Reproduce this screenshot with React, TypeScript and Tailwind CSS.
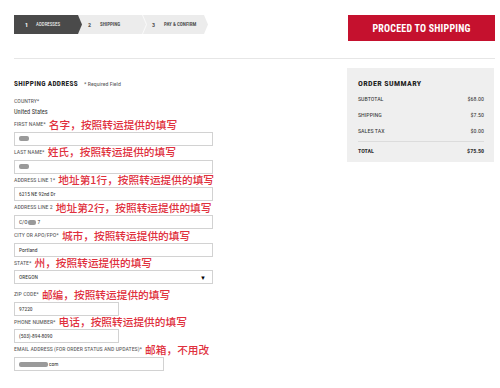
import React from "react";

const narrow = "font-['Roboto_Condensed','Liberation_Sans',sans-serif]";
const cjk = "font-['Noto_Sans_CJK_SC','Noto_Sans',sans-serif]";

function Blob({ w }: { w: number }) {
  return <span className="inline-block h-[5px] rounded-[2px] bg-[#9a9a9a] blur-[0.6px]" style={{ width: w }} />;
}

function Field({
  label,
  note,
  width,
  children,
}: {
  label: string;
  note?: string;
  width: string;
  children?: React.ReactNode;
}) {
  return (
    <div>
      <div className="h-[13.7px] flex items-center gap-[3px] whitespace-nowrap">
        <span className="text-[5.9px] text-[#555] uppercase leading-none">{label}</span>
        {note && <span className={`${cjk} text-[10.7px] leading-none text-[#e0303d] font-medium`}>{note}</span>}
      </div>
      <div className={`${width} h-[14px] border border-[#d2d2d2] bg-white flex items-center pl-[4px] text-[5.5px] text-[#333] whitespace-nowrap`}>
        {children}
      </div>
    </div>
  );
}

export default function App() {
  return (
    <div className={`w-[500px] h-[388px] bg-white overflow-hidden ${narrow}`}>
      <div className="pl-[14px] pr-[5px] pt-[15px]">
        {/* Header: steps + button */}
        <div className="h-[44px] flex justify-between items-start border-b border-[#e6e6e6]">
          <div className="relative flex h-[19px] w-[194px] whitespace-nowrap">
            <div className="absolute inset-0 bg-[#ececec] [clip-path:polygon(0_0,calc(100%-4px)_0,100%_50%,calc(100%-4px)_100%,0_100%)]" />
            <div className="relative h-full w-[68px] bg-[#4a4a4a] [clip-path:polygon(0_0,calc(100%-4px)_0,100%_50%,calc(100%-4px)_100%,0_100%)] flex items-center text-white">
              <span className="ml-[11px] text-[6px] font-bold">1</span>
              <span className="ml-[8px] text-[5px]">ADDRESSES</span>
            </div>
            <div className="relative h-full w-[63px] flex items-center text-[#555]">
              <span className="ml-[6px] text-[6px] font-bold">2</span>
              <span className="ml-[9px] text-[5px] font-bold">SHIPPING</span>
              <svg className="absolute right-[-2px] top-0 h-[19px] w-[5px]" viewBox="0 0 5 19">
                <polyline points="0.5,0 4.5,9.5 0.5,19" fill="none" stroke="#fafafa" strokeWidth="1" />
              </svg>
            </div>
            <div className="relative h-full flex items-center text-[#555]">
              <span className="ml-[7px] text-[6px] font-bold">3</span>
              <span className="ml-[9px] text-[5px] font-bold">PAY &amp; CONFIRM</span>
            </div>
          </div>
          <button className="w-[147px] h-[26px] bg-[#c5112e] text-white text-[10px] font-bold tracking-[0.2px] flex items-center justify-center">
            PROCEED TO SHIPPING
          </button>
        </div>

        <div className="flex justify-between">
          {/* Form */}
          <div className="w-[200px] pt-[20px]">
            <div className="flex items-center h-[10px] gap-[6px] whitespace-nowrap">
              <span className="text-[7.3px] font-bold tracking-[0.3px] text-[#222]">SHIPPING ADDRESS</span>
              <span className="text-[5.9px] text-[#555]">* Required Field</span>
            </div>
            <div className="mt-[8px] h-[8px] flex items-center text-[5.9px] text-[#555]">COUNTRY*</div>
            <div className="mt-[4px] h-[8px] flex items-center text-[6.4px] text-[#333]">United States</div>
            <div className="mt-[1.3px]">
              <Field label="First Name*" note="名字，按照转运提供的填写" width="w-[199px]">
                <Blob w={10} />
              </Field>
              <Field label="Last Name*" note="姓氏，按照转运提供的填写" width="w-[199px]">
                <Blob w={10} />
              </Field>
              <Field label="Address Line 1*" note="地址第1行，按照转运提供的填写" width="w-[199px]">
                6215 NE 92nd Dr
              </Field>
              <Field label="Address Line 2" note="地址第2行，按照转运提供的填写" width="w-[199px]">
                C/O
                <span className="ml-[1px] mr-[1px] flex"><Blob w={8} /></span>7
              </Field>
              <Field label="City or APO/FPO*" note="城市，按照转运提供的填写" width="w-[199px]">
                Portland
              </Field>
              <div className="mb-[3.6px]">
                <Field label="State*" note="州，按照转运提供的填写" width="w-[199px]">
                  <span className="flex-1">OREGON</span>
                  <span className="mr-[6px] text-[6px] text-black">▼</span>
                </Field>
              </div>
              <Field label="Zip Code*" note="邮编，按照转运提供的填写" width="w-[105px]">
                97220
              </Field>
              <Field label="Phone Number*" note="电话，按照转运提供的填写" width="w-[105px]">
                (503)-894-8090
              </Field>
              <Field label="Email Address (for order status and updates)*" note="邮箱，不用改" width="w-[150px]">
                <Blob w={29} />
                <span className="ml-[1px]">com</span>
              </Field>
            </div>
          </div>

          {/* Order summary */}
          <div className="w-[147px] mt-[9px] mr-[1px] h-[94px] bg-[#efefef] px-[11px] pt-[11px] pr-[10px] text-[#333]">
            <div className="h-[10px] flex items-center text-[8px] font-bold tracking-[0.4px] text-[#222]">ORDER SUMMARY</div>
            <div className="mt-[1px] text-[6px]">
              <div className="h-[16px] flex items-center justify-between"><span>SUBTOTAL</span><span>$68.00</span></div>
              <div className="h-[16px] flex items-center justify-between"><span>SHIPPING</span><span>$7.50</span></div>
              <div className="h-[16px] flex items-center justify-between"><span>SALES TAX</span><span>$0.00</span></div>
              <div className="mt-[3px] border-t border-[#dcdcdc] h-[17px] flex items-center justify-between font-bold">
                <span>TOTAL</span><span>$75.50</span>
              </div>
            </div>
          </div>
        </div>
      </div>
    </div>
  );
}
